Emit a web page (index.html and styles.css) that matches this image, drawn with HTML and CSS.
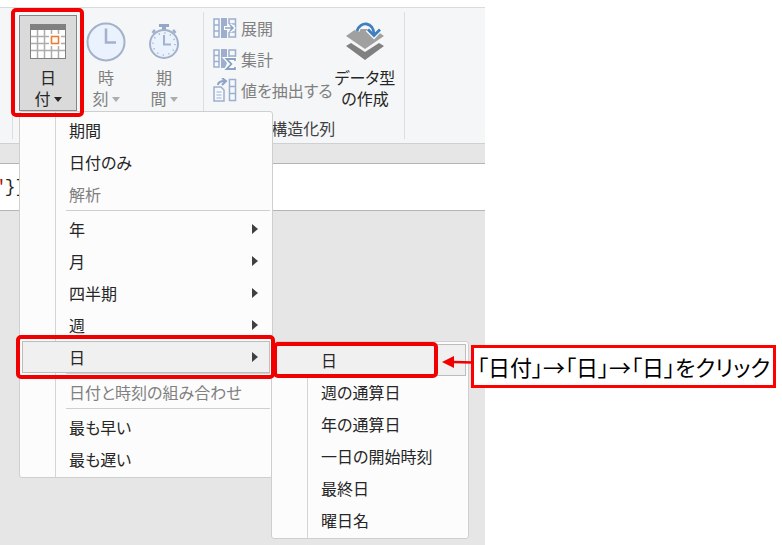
FILE: index.html
```html
<!DOCTYPE html>
<html lang="ja">
<head>
    <meta charset="UTF-8">
    <meta name="viewport" content="width=device-width, initial-scale=1.0">
    <title>日付の抽出</title>
    <link rel="stylesheet" href="styles.css">
</head>
<body>

    <div class="editor">
        <!-- Ribbon -->
        <div class="ribbon">
            <div class="group date-group">
                <div class="dropdown">
                    <button class="big-btn active">
                        <span class="big-icon">
                            <svg width="38" height="36" viewBox="0 0 38 36">
                                <rect x="1" y="0" width="36" height="35" fill="#808080"/>
                                <rect x="2" y="6" width="34" height="28" fill="#fff"/>
                                <path d="M8.500 6v28M15.500 6v28M22.500 6v28M29.500 6v28M2 12.500h34M2 19.500h34M2 26.500h34" stroke="#adadad" stroke-width="1.500"/>
                                <rect x="20" y="10" width="12" height="12" fill="#fff"/>
                                <rect x="22.500" y="12.500" width="7" height="7" fill="#fff" stroke="#ed7d31" stroke-width="1.600"/>
                            </svg>
                        </span>
                        日<br>付<span class="caret"></span>
                    </button>
                    <span class="mark mark-date"></span>

                    <!-- Date menu -->
                    <ul class="menu">
                        <li><button>期間</button></li>
                        <li><button>日付のみ</button></li>
                        <li><button disabled>解析</button></li>
                        <li class="line"></li>
                        <li><button class="more">年</button></li>
                        <li><button class="more">月</button></li>
                        <li><button class="more">四半期</button></li>
                        <li><button class="more">週</button></li>
                        <li>
                            <button class="more selected">日</button>
                            <span class="mark mark-day"></span>
                            <ul class="menu submenu">
                                <li>
                                    <button class="selected">日</button>
                                    <span class="mark mark-subday"></span>
                                    <div class="callout">
                                        <svg class="arrow" width="32" height="12" viewBox="0 0 32 12">
                                            <path d="M10 6L32 6.500" stroke="#f00000" stroke-width="2.500"/>
                                            <path d="M0 6L12 0V12Z" fill="#f00000"/>
                                        </svg>
                                        「日付」→「日」→「日」をクリック
                                    </div>
                                </li>
                                <li><button>週の通算日</button></li>
                                <li><button>年の通算日</button></li>
                                <li><button>一日の開始時刻</button></li>
                                <li><button>最終日</button></li>
                                <li><button>曜日名</button></li>
                            </ul>
                        </li>
                        <li class="line"></li>
                        <li><button disabled>日付と時刻の組み合わせ</button></li>
                        <li class="line"></li>
                        <li><button>最も早い</button></li>
                        <li><button>最も遅い</button></li>
                    </ul>
                </div>
                <button class="big-btn" disabled>
                    <span class="big-icon">
                        <svg width="40" height="40" viewBox="0 0 40 40">
                            <circle cx="20" cy="20" r="18.500" fill="#eaf2fd" stroke="#a3b1cb" stroke-width="2"/>
                            <path d="M20 6.500V20.500H30" fill="none" stroke="#a3b1cb" stroke-width="2.500"/>
                        </svg>
                    </span>
                    時<br>刻<span class="caret"></span>
                </button>
                <button class="big-btn" disabled>
                    <span class="big-icon">
                        <svg width="32" height="38" viewBox="0 0 32 38">
                            <path d="M11 1h10v3h-3v4h-4V4h-3z" fill="#93a7c6"/>
                            <path d="M3.500 9l2.500-3 2 2-2.500 3zM28.500 9l-2.500-3-2 2 2.500 3z" fill="#a3b1cb"/>
                            <circle cx="16" cy="21" r="14" fill="#eaf2fd" stroke="#a3b1cb" stroke-width="2"/>
                            <circle cx="16" cy="21" r="11" fill="none" stroke="#a3b1cb" stroke-width="1.500" stroke-dasharray="1.200 4.560"/>
                            <path d="M16 12V21.500H23" fill="none" stroke="#a3b1cb" stroke-width="2"/>
                        </svg>
                    </span>
                    期<br>間<span class="caret"></span>
                </button>
            </div>

            <div class="group column-group">
                <div class="tools">
                    <div class="small-tools">
                        <button class="small-btn" disabled>
                            <svg width="24" height="20" viewBox="0 0 24 20">
                                <path d="M1 1h5v18H1zM1 7h5M1 13h5" fill="#f5f8fd" stroke="#9dafcd" stroke-width="1.500"/>
                                <path d="M8 0h6v20H8z" fill="#9dafcd"/>
                                <path d="M16 6V1h6.500v18H16v-5M16 6h6.500M16 14h6.500" fill="none" stroke="#9dafcd" stroke-width="1.500"/>
                                <path d="M11 10h9M17 7l3 3-3 3" fill="none" stroke="#fff" stroke-width="4"/>
                                <path d="M12 10h8M17 7l3 3-3 3" fill="none" stroke="#8da3c5" stroke-width="1.600"/>
                            </svg>
                            展開
                        </button>
                        <button class="small-btn" disabled>
                            <svg width="24" height="22" viewBox="0 0 24 22">
                                <path d="M1 2h5v17H1zM1 7.500h5M1 13.500h5" fill="#f5f8fd" stroke="#9dafcd" stroke-width="1.500"/>
                                <path d="M8 1h6v9l-2 2 2 3-2 5H8z" fill="#9dafcd"/>
                                <path d="M16 9V2h6.500v7M16 8h6.500" fill="none" stroke="#9dafcd" stroke-width="1.500"/>
                                <path d="M22 13v-2h-8.500l5 5-5 5H22v-2" fill="none" stroke="#fff" stroke-width="4"/>
                                <path d="M22 13v-2h-8.500l5 5-5 5H22v-2" fill="none" stroke="#8da3c5" stroke-width="1.800"/>
                            </svg>
                            集計
                        </button>
                        <button class="small-btn" disabled>
                            <svg width="24" height="24" viewBox="0 0 24 24">
                                <path d="M1 9h7l3 3v11H1z" fill="#f5f8fd" stroke="#9dafcd" stroke-width="1.500"/>
                                <path d="M3.500 14h5M3.500 17h5M3.500 20h5" stroke="#9dafcd" stroke-width="1.200"/>
                                <path d="M5 7c0-3 2-4 7-4" fill="none" stroke="#8da3c5" stroke-width="2"/>
                                <path d="M9 0l4 3-4 4" fill="none" stroke="#8da3c5" stroke-width="2"/>
                                <path d="M16.500 1.500h6v21h-6zM16.500 8.500h6M16.500 15.500h6" fill="#f5f8fd" stroke="#9dafcd" stroke-width="1.500"/>
                            </svg>
                            値を抽出する
                        </button>
                    </div>
                    <button class="big-btn">
                        <span class="big-icon">
                            <svg width="40" height="40" viewBox="0 0 40 40">
                                <path d="M1 24l5-3 14 9 14-9 5 3-19 14z" fill="#808080"/>
                                <path d="M1 14l10-7h18l10 7-19 13z" fill="#a0a0a0"/>
                                <path d="M12 9c3-10 17-10 17 4" fill="none" stroke="#f5f6f7" stroke-width="5"/>
                                <path d="M22.500 7.500l6.500 6.500 6-6.500" fill="none" stroke="#f5f6f7" stroke-width="5"/>
                                <path d="M12 9c3-10 17-10 17 4" fill="none" stroke="#3f7fc0" stroke-width="2.800"/>
                                <path d="M23 7.500l6 6 6-6" fill="none" stroke="#3f7fc0" stroke-width="2.800"/>
                            </svg>
                        </span>
                        データ型<br>の作成
                    </button>
                </div>
                <div class="group-name">構造化列</div>
            </div>
        </div>

        <!-- Formula bar -->
        <code class="formula"><span class="string">"</span>}}</code>
    </div>

</body>
</html>
```

FILE: styles.css
```css
* { box-sizing: border-box; }
body {
    margin: 0; background: white; color: #262626;
    font-family: "Noto Sans CJK JP", sans-serif; font-size: 16px;
    font-feature-settings: "palt";
}
button {
    font: inherit; color: inherit; background: none;
    border: 1px solid transparent; padding: 0; cursor: pointer;
}
button:disabled { color: #808080; cursor: default; }
.editor { width: 62%; min-height: 100vh; background: #e6e6e6; border-top: 7px solid white; }

/* Ribbon */
.ribbon {
    display: flex; height: 137px; padding: 4px 0 4px 12px; background: #f5f6f7;
    border-top: 1px solid #d9dcdc; border-bottom: 1px solid #d0d0d0;
}
.group { border-left: 1px solid #dcdddf; }
.date-group { display: flex; padding: 3px 10px 0 6px; }
.column-group { display: flex; flex-direction: column; padding: 0 8px 0 6px; border-right: 1px solid #dcdddf; }
.tools { display: flex; }
.tools .big-btn { margin-top: 3px; }
.dropdown { position: relative; height: 96px; }
.big-btn { display: block; min-width: 58px; height: 96px; line-height: 21px; text-align: center; }
.big-btn.active { background: #d9dad9; border: 1px solid #858585; }
.big-icon { display: flex; align-items: center; justify-content: center; height: 50px; }
.caret {
    display: inline-block; margin-left: 3px; vertical-align: 3px;
    border: 4px solid transparent; border-top: 5px solid currentColor; border-bottom: 0;
}
.big-btn:disabled .caret { border-top-color: #adadad; }
.small-tools { display: flex; flex-direction: column; }
.small-btn { display: flex; align-items: center; gap: 4px; height: 31px; padding: 0 0 0 2px; }
.group-name { text-align: center; line-height: 34px; color: #404040; }

/* Menus */
.menu {
    position: absolute; z-index: 1; top: 96px; left: 0; width: 254px;
    margin: 0; padding: 2px; list-style: none; border: 1px solid #cfcfcf; border-radius: 3px;
    background: linear-gradient(#d5d5d5, #d5d5d5) 35px 0 / 1px 100% no-repeat #fcfcfc;
}
.menu li { position: relative; }
.menu button {
    display: flex; align-items: center; justify-content: space-between;
    width: 100%; height: 32px; padding: 0 11px 1px 46px; text-align: left;
}
.menu .selected { background: #f0f0f0; border-color: #bdbdbd; }
.menu .line { height: 3px; margin-left: 44px; border-bottom: 1px solid #fcfcfc; border-top: 1px solid #cfcfcf; }
.more::after {
    content: ""; border: 5px solid transparent;
    border-left: 6px solid #404040; border-right: 0;
}
.menu .submenu { top: 0; left: 249px; width: 198px; }

/* Red marks and note */
.mark { position: absolute; z-index: 2; border: 4px solid #f00000; border-radius: 5px; pointer-events: none; }
.mark-date { inset: -7px -7px -6px -8px; }
.mark-day { inset: -6px -5px -6px -6px; }
.mark-subday { inset: -2px 28px -2px -1px; }
.callout {
    position: absolute; z-index: 3; top: 1px; left: 197px; padding: 0 3px;
    background: white; border: 3px solid #ff0000; color: black;
    font-size: 22px; line-height: 37px; white-space: nowrap;
}
.arrow { position: absolute; top: 8px; right: 100%; }

/* Formula bar */
.formula {
    display: block; height: 48px; margin-top: 19px; background: white;
    border-top: 1px solid #b5b5b5; border-bottom: 1px solid #b5b5b5;
    font-family: "Liberation Mono", monospace; font-size: 18px; line-height: 46px; text-indent: -6px;
}
.string { color: #a31515; }
```
